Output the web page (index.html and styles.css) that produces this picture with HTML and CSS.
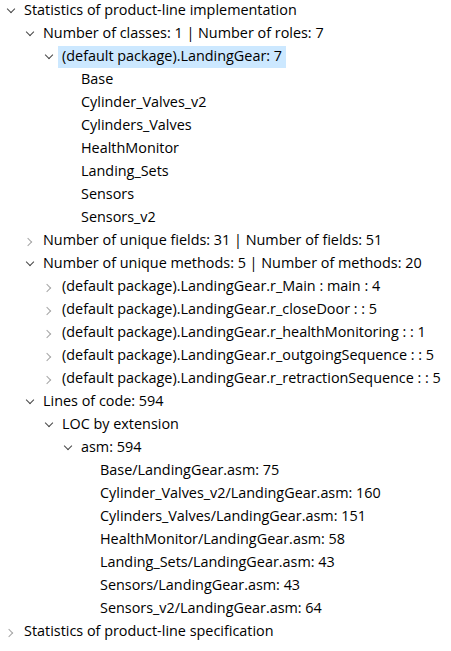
FILE: index.html
```html
<!DOCTYPE html>
<html>
<head>
<meta charset="utf-8">
<link rel="stylesheet" href="styles.css">
</head>
<body>
<ul class="tree">
  <li>
    <div class="row"><span class="tw open"></span><span class="label">Statistics of product-line implementation</span></div>
    <ul>
      <li>
        <div class="row"><span class="tw open"></span><span class="label">Number of classes: 1 | Number of roles: 7</span></div>
        <ul>
          <li>
            <div class="row"><span class="tw open"></span><span class="label selected">(default package).LandingGear: 7</span></div>
            <ul>
              <li><div class="row"><span class="tw"></span><span class="label">Base</span></div></li>
              <li><div class="row"><span class="tw"></span><span class="label">Cylinder_Valves_v2</span></div></li>
              <li><div class="row"><span class="tw"></span><span class="label">Cylinders_Valves</span></div></li>
              <li><div class="row"><span class="tw"></span><span class="label">HealthMonitor</span></div></li>
              <li><div class="row"><span class="tw"></span><span class="label">Landing_Sets</span></div></li>
              <li><div class="row"><span class="tw"></span><span class="label">Sensors</span></div></li>
              <li><div class="row"><span class="tw"></span><span class="label">Sensors_v2</span></div></li>
            </ul>
          </li>
        </ul>
      </li>
      <li>
        <div class="row"><span class="tw closed"></span><span class="label">Number of unique fields: 31 | Number of fields: 51</span></div>
      </li>
      <li>
        <div class="row"><span class="tw open"></span><span class="label">Number of unique methods: 5 | Number of methods: 20</span></div>
        <ul>
          <li><div class="row"><span class="tw closed"></span><span class="label">(default package).LandingGear.r_Main : main : 4</span></div></li>
          <li><div class="row"><span class="tw closed"></span><span class="label">(default package).LandingGear.r_closeDoor : : 5</span></div></li>
          <li><div class="row"><span class="tw closed"></span><span class="label">(default package).LandingGear.r_healthMonitoring : : 1</span></div></li>
          <li><div class="row"><span class="tw closed"></span><span class="label">(default package).LandingGear.r_outgoingSequence : : 5</span></div></li>
          <li><div class="row"><span class="tw closed"></span><span class="label">(default package).LandingGear.r_retractionSequence : : 5</span></div></li>
        </ul>
      </li>
      <li>
        <div class="row"><span class="tw open"></span><span class="label">Lines of code: 594</span></div>
        <ul>
          <li>
            <div class="row"><span class="tw open"></span><span class="label">LOC by extension</span></div>
            <ul>
              <li>
                <div class="row"><span class="tw open"></span><span class="label">asm: 594</span></div>
                <ul>
                  <li><div class="row"><span class="tw"></span><span class="label">Base/LandingGear.asm: 75</span></div></li>
                  <li><div class="row"><span class="tw"></span><span class="label">Cylinder_Valves_v2/LandingGear.asm: 160</span></div></li>
                  <li><div class="row"><span class="tw"></span><span class="label">Cylinders_Valves/LandingGear.asm: 151</span></div></li>
                  <li><div class="row"><span class="tw"></span><span class="label">HealthMonitor/LandingGear.asm: 58</span></div></li>
                  <li><div class="row"><span class="tw"></span><span class="label">Landing_Sets/LandingGear.asm: 43</span></div></li>
                  <li><div class="row"><span class="tw"></span><span class="label">Sensors/LandingGear.asm: 43</span></div></li>
                  <li><div class="row"><span class="tw"></span><span class="label">Sensors_v2/LandingGear.asm: 64</span></div></li>
                </ul>
              </li>
            </ul>
          </li>
        </ul>
      </li>
    </ul>
  </li>
  <li>
    <div class="row"><span class="tw closed"></span><span class="label">Statistics of product-line specification</span></div>
  </li>
</ul>
</body>
</html>
```
FILE: styles.css
```css
html, body {
  margin: 0;
  padding: 0;
  background: #ffffff;
}
body {
  font-family: "Open Sans", "Noto Sans", sans-serif;
  font-size: 14.4px;
  color: #000000;
}
ul {
  list-style: none;
  margin: 0;
  padding: 0;
}
.tree ul {
  padding-left: 19px;
}
.row {
  display: flex;
  align-items: flex-start;
  height: 23px;
  padding-left: 4px;
  white-space: nowrap;
}
.tw {
  width: 14px;
  height: 23px;
  flex: none;
  position: relative;
}
.tw.open::before {
  content: "";
  position: absolute;
  left: 3.5px;
  top: 6px;
  width: 5px;
  height: 5px;
  border-right: 1.3px solid #474747;
  border-bottom: 1.3px solid #474747;
  transform: rotate(45deg);
}
.tw.closed::before {
  content: "";
  position: absolute;
  left: 1.5px;
  top: 8.5px;
  width: 5px;
  height: 5px;
  border-right: 1.3px solid #a6a6a6;
  border-bottom: 1.3px solid #a6a6a6;
  transform: rotate(-45deg);
}
.label {
  margin-left: 2px;
  padding: 0 4px 2px;
  height: 20px;
  line-height: 20px;
}
.label.selected {
  background: #cce8ff;
}
```
